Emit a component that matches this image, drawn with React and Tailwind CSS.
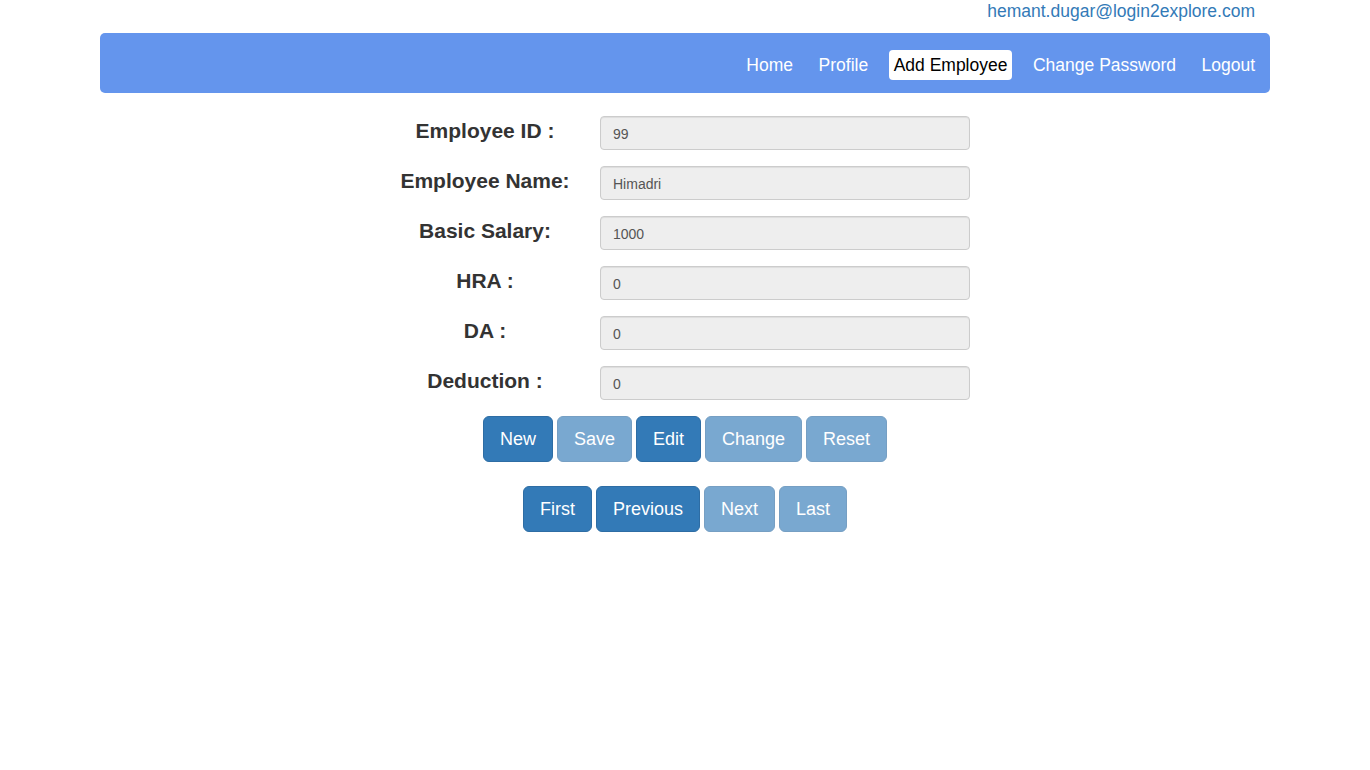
import React from "react";

const fields = [
    { label: "Employee ID :", value: "99" },
    { label: "Employee Name:", value: "Himadri" },
    { label: "Basic Salary:", value: "1000" },
    { label: "HRA :", value: "0" },
    { label: "DA :", value: "0" },
    { label: "Deduction :", value: "0" },
];

const navItems = ["Home", "Profile", "Add Employee", "Change Password", "Logout"];

function Btn({ children, disabled }) {
    return (
        <button
            disabled={disabled}
            className={
                disabled
                    ? "h-[46px] px-[16px] rounded-[6px] border border-[#2e6da4] bg-[#337ab7] opacity-65 text-white text-[18px] leading-[24px]"
                    : "h-[46px] px-[16px] rounded-[6px] border border-[#2e6da4] bg-[#337ab7] text-white text-[18px] leading-[24px]"
            }
        >
            {children}
        </button>
    );
}

export default function App() {
    return (
        <div className="min-h-screen bg-white font-['Liberation_Sans',Arial,sans-serif] text-[#333]">
            <div className="h-[33px] pr-[115px] flex justify-end">
                <a className="text-[17.5px] leading-[22px] text-[#337ab7]">
                    hemant.dugar@login2explore.com
                </a>
            </div>

            <nav className="mx-[100px] h-[60px] bg-[#6495ed] rounded-[5px] flex items-center justify-end pr-[10px] pt-[4px]">
                {navItems.map((item) => (
                    <span
                        key={item}
                        className={
                            item === "Add Employee"
                                ? "ml-[15.5px] px-[5px] py-[5px] text-[17.5px] leading-[20px] rounded-[4px] bg-white text-black"
                                : "ml-[15.5px] px-[5px] py-[5px] text-[17.5px] leading-[20px] text-white"
                        }
                    >
                        {item}
                    </span>
                ))}
            </nav>

            <div className="pt-[23px] flex flex-col">
                {fields.map((f) => (
                    <div key={f.label} className="flex mb-[16px]">
                        <div className="ml-[370px] w-[230px] text-center">
                            <span className="block mt-[3px] text-[21px] leading-[24px] font-bold text-[#333]">
                                {f.label}
                            </span>
                        </div>
                        <input
                            readOnly
                            value={f.value}
                            className="w-[370px] h-[34px] px-[12px] pt-[1px] bg-[#eee] border border-[#ccc] rounded-[4px] text-[14px] text-[#555] shadow-[inset_0_1px_1px_rgba(0,0,0,0.075)] outline-none"
                        />
                    </div>
                ))}
            </div>

            <div className="flex justify-center gap-[4px]">
                <Btn>New</Btn>
                <Btn disabled>Save</Btn>
                <Btn>Edit</Btn>
                <Btn disabled>Change</Btn>
                <Btn disabled>Reset</Btn>
            </div>

            <div className="flex justify-center gap-[4px] mt-[24px]">
                <Btn>First</Btn>
                <Btn>Previous</Btn>
                <Btn disabled>Next</Btn>
                <Btn disabled>Last</Btn>
            </div>
        </div>
    );
}
